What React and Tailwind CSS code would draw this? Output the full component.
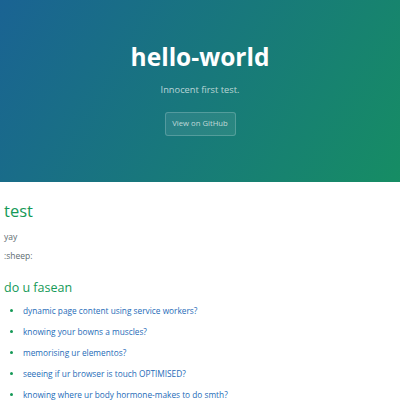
export default function App() {
  const items = [
    "dynamic page content using service workers?",
    "knowing your bowns a muscles?",
    "memorising ur elementos?",
    "seeeing if ur browser is touch OPTIMISED?",
    "knowing where ur body hormone-makes to do smth?",
  ];
  return (
    <div className="w-[400px] h-[400px] overflow-hidden bg-white" style={{ fontFamily: '"Open Sans", "Helvetica Neue", Arial, sans-serif' }}>
      <header className="h-[182px] flex flex-col items-center pt-[42px] bg-[linear-gradient(120deg,#1a6393,#168d64)] text-white">
        <h1 className="text-[24.5px] font-bold leading-[30px]">hello-world</h1>
        <p className="mt-[11px] text-[9.3px] leading-[14px] font-normal text-white/70">Innocent first test.</p>
        <a className="mt-[15px] w-[71px] h-[24px] flex items-center justify-center text-[7.7px] rounded-[3px] border border-white/20 bg-white/[0.08] text-white/70">View on GitHub</a>
      </header>
      <main className="px-[4px] pt-[18px] text-[#606c71]">
        <h2 className="text-[16.5px] leading-[22px] text-[#159957] font-normal">test</h2>
        <p className="mt-[9px] text-[8.5px] leading-[12px]">yay</p>
        <p className="mt-[7px] text-[8.5px] leading-[12px]">:sheep:</p>
        <h3 className="mt-[18px] text-[12.5px] leading-[16px] text-[#159957] font-normal">do u fasean</h3>
        <ul className="mt-[4px] pl-[19px] list-disc marker:text-[#159957]">
          {items.map((t) => (
            <li key={t} className="text-[8.3px] leading-[21px] text-[#1e6bb8]">{t}</li>
          ))}
        </ul>
      </main>
    </div>
  );
}
